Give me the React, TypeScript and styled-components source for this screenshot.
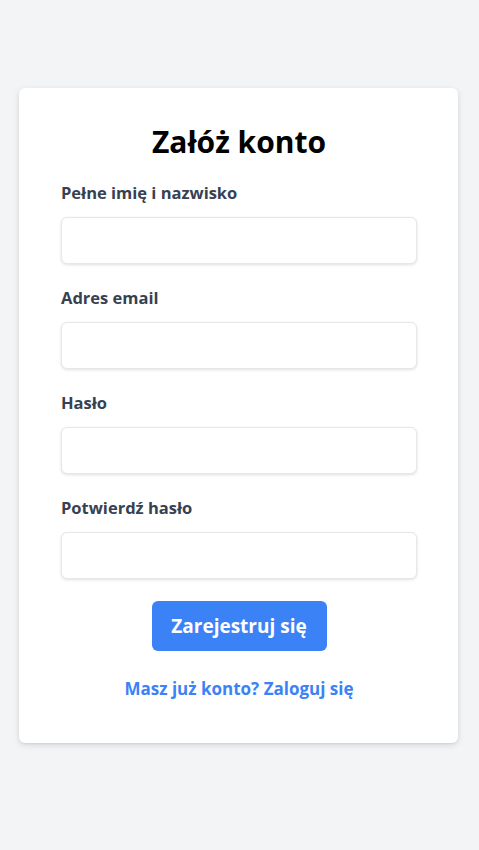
import React from 'react';
import styled, { createGlobalStyle } from 'styled-components';

const GlobalStyle = createGlobalStyle`
  html, body {
    margin: 0;
    padding: 0;
    background: #f3f4f6;
  }
  body {
    font-family: 'Open Sans', 'Noto Sans', sans-serif;
    -webkit-font-smoothing: antialiased;
  }
  * { box-sizing: border-box; }
`;

const Page = styled.div`
  min-height: 850px;
  padding: 88px 21px 0 19px;
`;

const Card = styled.form`
  width: 439px;
  background: #ffffff;
  border-radius: 6px;
  box-shadow: 0 2px 6px rgba(0, 0, 0, 0.12), 0 1px 2px rgba(0, 0, 0, 0.06);
  padding: 36px 41px 42px 42px;
  display: flex;
  flex-direction: column;
`;

const Title = styled.h1`
  margin: 0 0 21px;
  font-size: 30px;
  line-height: 36px;
  font-weight: 700;
  color: #000;
  text-align: center;
`;

const Field = styled.div`
  display: flex;
  flex-direction: column;
  margin-bottom: 22px;
`;

const Label = styled.label`
  font-size: 16.5px;
  line-height: 24px;
  font-weight: 700;
  color: #374151;
  margin-bottom: 12px;
`;

const Input = styled.input`
  height: 47px;
  width: 100%;
  border: 1px solid #e5e7eb;
  border-radius: 6px;
  background: #fff;
  box-shadow: 0 1px 3px rgba(0, 0, 0, 0.12);
  padding: 0 12px;
  font: inherit;
  outline: none;
`;

const SubmitButton = styled.button`
  align-self: center;
  width: 175px;
  height: 50px;
  border: none;
  border-radius: 6px;
  background: #3b82f6;
  color: #fff;
  font-family: inherit;
  font-size: 19px;
  font-weight: 700;
  cursor: pointer;
`;

const LoginLink = styled.a`
  margin-top: 26px;
  align-self: center;
  font-size: 17px;
  line-height: 24px;
  font-weight: 700;
  color: #3b82f6;
  text-decoration: none;
  cursor: pointer;
`;

const fields = [
  { id: 'name', label: 'Pełne imię i nazwisko', type: 'text' },
  { id: 'email', label: 'Adres email', type: 'email' },
  { id: 'password', label: 'Hasło', type: 'password' },
  { id: 'confirm', label: 'Potwierdź hasło', type: 'password' },
];

const App: React.FC = () => {
  return (
    <>
      <GlobalStyle />
      <Page>
        <Card onSubmit={(e) => e.preventDefault()}>
          <Title>Załóż konto</Title>
          {fields.map((f) => (
            <Field key={f.id}>
              <Label htmlFor={f.id}>{f.label}</Label>
              <Input id={f.id} type={f.type} />
            </Field>
          ))}
          <SubmitButton type="submit">Zarejestruj się</SubmitButton>
          <LoginLink>Masz już konto? Zaloguj się</LoginLink>
        </Card>
      </Page>
    </>
  );
};

export default App;
